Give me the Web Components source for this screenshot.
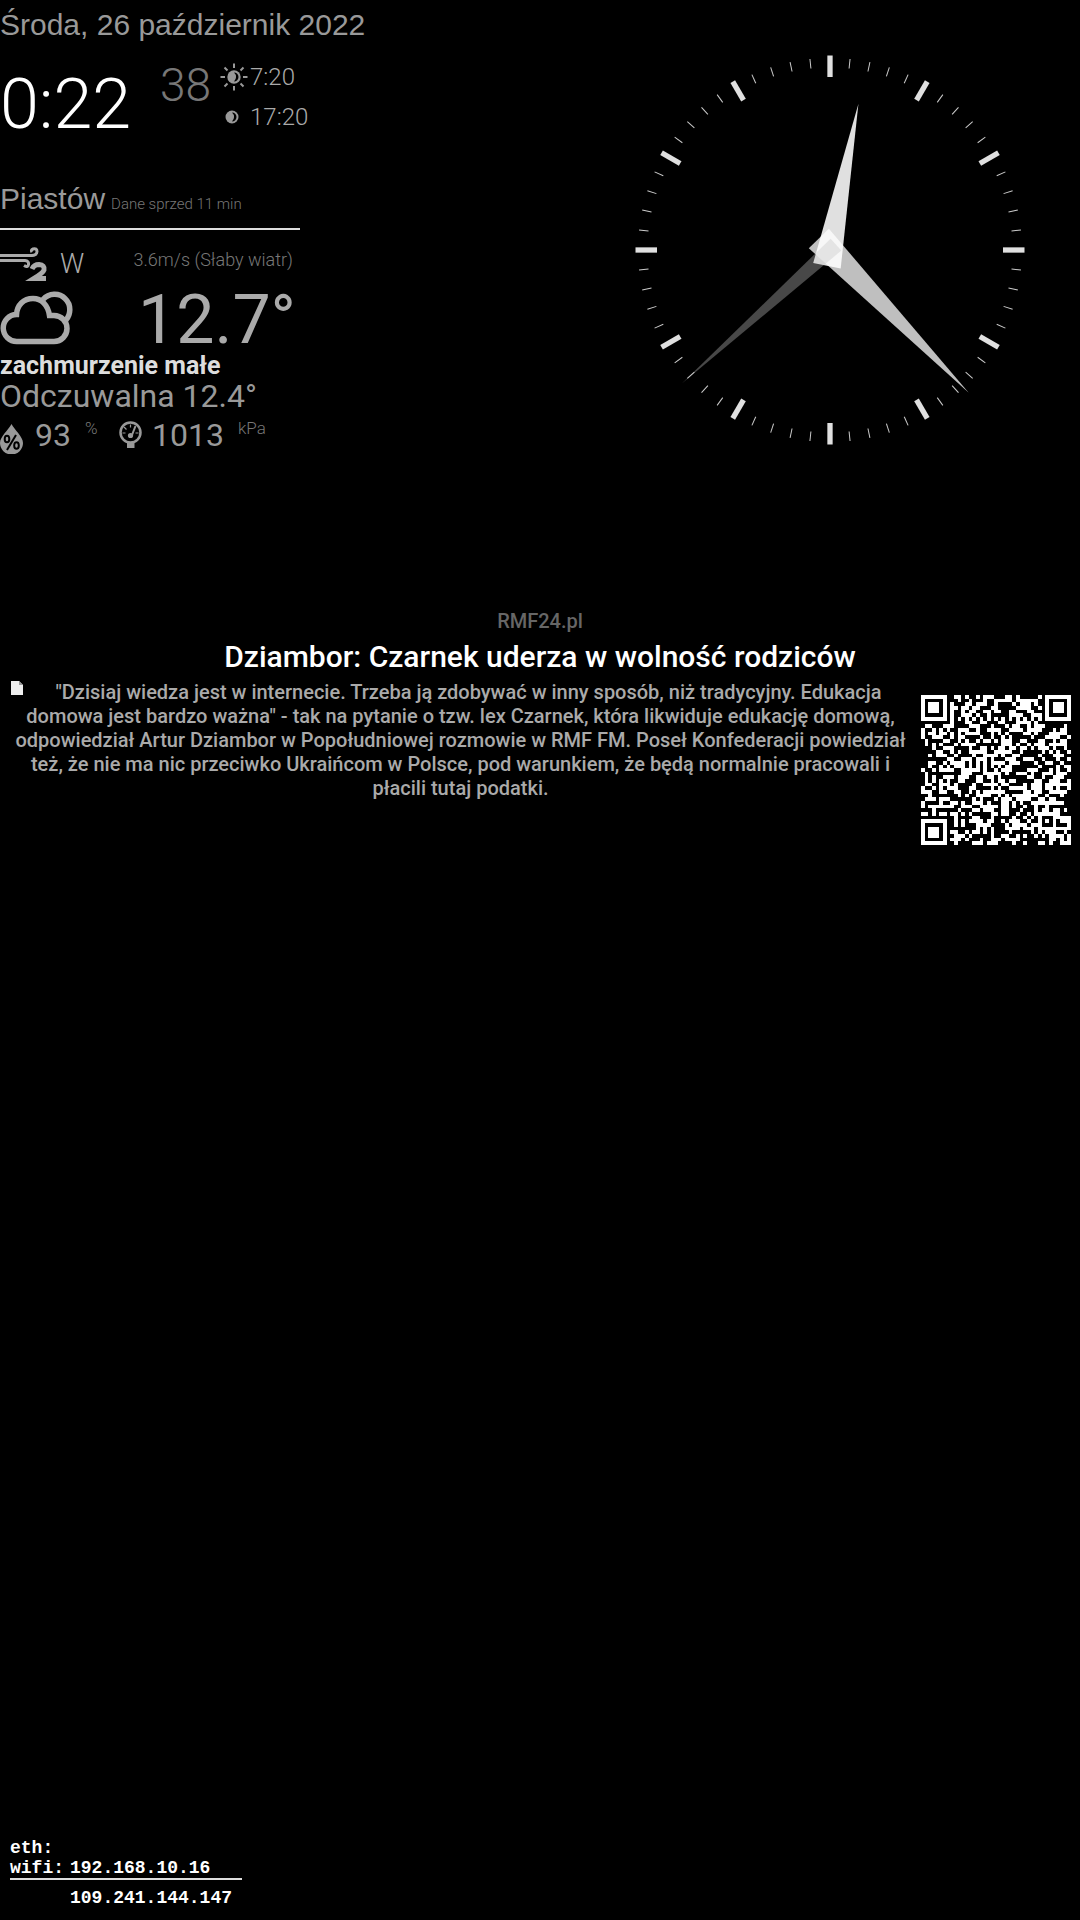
<!DOCTYPE html>
<html lang="pl"><head><meta charset="utf-8"><title>Lustro</title>
<style>body{margin:0;background:#000}</style></head><body>
<mirror-app></mirror-app>
<script>
const define=(name,html,ready)=>customElements.define(name,class extends HTMLElement{
  constructor(){super();this.attachShadow({mode:'open'}).innerHTML=html;}
  connectedCallback(){if(ready)ready(this.shadowRoot,this);}
});

define('date-time',`<style>
:host{display:block;color:#999}
.date{font:30px/50px "Liberation Sans",sans-serif}
.row{display:flex;align-items:flex-start;padding-top:7px;height:94px;box-sizing:border-box;font-family:Roboto,sans-serif;font-weight:300}
.time{font-size:70px;line-height:74px;margin-top:10px;color:#fff;min-width:160px}
.sec{font-size:46px;line-height:48px;margin-top:4px;color:#777;min-width:60px}
.sun{display:grid;grid-template-columns:30px auto;align-items:center;font-size:24px;line-height:40px;font-weight:300;color:#aaa}
svg{display:block}
</style>
<div class="date">Środa, 26 październik 2022</div>
<div class="row"><span class="time">0:22</span><span class="sec">38</span>
<div class="sun">
<svg width="28" height="28" viewBox="-14 -14 28 28"><circle r="6.7" fill="#999"/><path d="M0-4.500A4.500 4.500 0 0 1 0 4.500A6 6 0 0 0 0-4.500Z" fill="#000"/><g stroke="#999" stroke-width="2"><path d="M0-13.500V-9M0 13.500V9M-13.500 0H-9M13.500 0H9M-9.500-9.500L-6.500-6.500M9.500-9.500L6.500-6.500M-9.500 9.500L-6.500 6.500M9.500 9.500L6.500 6.500"/></g></svg><span>7:20</span>
<svg width="28" height="28" viewBox="-12 -14 28 28"><circle r="6.500" fill="#999"/><path d="M0-4.500A4.500 4.500 0 0 1 0 4.500A6 6 0 0 0 0-4.500Z" fill="#000"/></svg><span>17:20</span>
</div></div>`);

define('weather-panel',`<style>
:host{display:block;width:300px;color:#999;font:300 18px/20px Roboto,sans-serif}
header{display:flex;align-items:baseline;gap:6px;padding-top:30px;height:54px;border-bottom:2px solid #ddd;font:300 15px/50px Roboto,sans-serif;color:#777}
h2{margin:0;font:30px/50px "Liberation Sans",sans-serif;color:#999}
.row{display:flex}
svg{display:block;flex:none}
.wind{height:52px;padding-top:4px;align-items:center;gap:8px}
.wind b{font:300 27px/30px Roboto,sans-serif;color:#aaa;margin-top:8px}
.wind span{margin-left:auto;padding-right:7px;color:#777}
.wind svg{margin-top:8px}
.now{justify-content:space-between;align-items:center;height:66px;font-weight:400;font-size:68px;line-height:62px;color:#aaa;padding-right:4px}
.now svg{margin-top:-2px}
.now span{padding-top:2px}
.desc{font-weight:700;font-size:25px;line-height:28px;color:#ddd}
.feels{font-weight:400;font-size:32px;line-height:32px}
.air{font-weight:400;font-size:32px;line-height:46px}
.air div{display:flex;align-items:flex-start;width:118px}
.air div+div{width:auto}
.air svg{margin-top:12px}
.air div+div svg{margin-top:9px}
.air span{width:42px;padding-left:12px}
.air div+div span{width:78px;padding-left:8px}
.air small{font-weight:300;font-size:17px;line-height:32px;color:#777;margin-left:8px}
</style>
<header><h2>Piastów</h2><span>Dane sprzed 11 min</span></header>
<div class="row wind">
<svg width="52" height="34" viewBox="0 0 52 34" fill="none" stroke="#aaa" stroke-width="3"><path d="M0 8.500H32Q37 8 37 4.500T33 2Q30.500 3 32 5M0 13.500H25Q29 14 28.500 17.500T24 18.500"/><path d="M32 22Q34 17.500 39 17.500Q45 18 44 23Q43 26 34 31.500H46" stroke-width="5"/></svg>
<b>W</b><span>3.6m/s (Słaby wiatr)</span></div>
<div class="row now">
<svg width="73" height="54" viewBox="0 0 73 54" fill="none" stroke="#aaa" stroke-width="5.500"><path d="M17 50.500H54A13 13 0 0 0 54 24.500H49.500C48 14 41.500 7.500 33 7.500C23.500 7.500 17 14 16.500 23.500A13.500 13.500 0 0 0 17 50.500Z"/><path d="M43 8.500C49 2 59 1.500 65 7.500C72 14 70.500 24 66 29"/></svg>
<span>12.7°</span></div>
<div class="desc">zachmurzenie małe</div>
<div class="feels">Odczuwalna 12.4°</div>
<div class="row air"><div>
<svg width="23" height="30" viewBox="0 0 23 30"><path d="M11.500 0C14.500 6 23 12.500 23 19A11.500 11.500 0 0 1 0 19C0 12.500 8.500 6 11.500 0Z" fill="#999"/><g fill="none" stroke="#000" stroke-width="2"><path d="M16 11L7 26"/><ellipse cx="7" cy="15" rx="2.300" ry="3.300"/><ellipse cx="16.500" cy="21.500" rx="2.300" ry="3.300"/></g></svg>
<span>93</span><small>%</small></div><div>
<svg width="26" height="28" viewBox="-1 0 26 28"><path d="M8 20H15.500V27H8Z" fill="#999"/><circle cx="11.500" cy="11.500" r="10" fill="#000" stroke="#999" stroke-width="2.500"/><path d="M11.500 3.500V6.500M5 6L7.500 8.500M3.500 12H6.500M16.500 12H19.500" stroke="#999" stroke-width="1.200"/><path d="M16.500 5L13 14" stroke="#999" stroke-width="2"/><circle cx="11.500" cy="14.500" r="2.600" fill="#999"/></svg>
<span>1013</span><small>kPa</small></div></div>`);

define('analog-clock',`<style>:host{display:block;width:400px}svg{display:block;width:100%}</style>
<svg viewBox="-200 -200 400 400" role="img" aria-label="0:22:38"><g id="ticks"></g>
<path d="M-14 16H14L0-149Z" fill="#fff" fill-opacity=".88" transform="rotate(11)"/>
<path d="M-14 16H14L0-199Z" fill="#fff" fill-opacity=".75" transform="rotate(135.800)"/>
<path d="M-8 8H8L0-199Z" fill="#c4c4c4" fill-opacity=".37" transform="rotate(228)"/></svg>`,root=>{
  let s='';
  for(let i=0;i<60;i++)s+=i%5?`<path d="M0-192V-182.500" stroke="#ccc" stroke-width="1" transform="rotate(${i*6})"/>`:`<path d="M0-194.500V-173" stroke="#e0e0e0" stroke-width="5.300" transform="rotate(${i*6})"/>`;
  root.getElementById('ticks').innerHTML=s;
});

define('qr-code',`<style>:host{display:block;width:150px}svg{display:block;width:100%}</style>
<svg viewBox="0 0 41 41" shape-rendering="crispEdges" role="img" aria-label="QR"><path fill="#fff"/></svg>`,root=>{
  // Structural patterns of a 41-module symbol; the data area is placeholder filler.
  const n=41;let seed=2022,d='';
  const ring=(x,y,cx,cy)=>Math.max(Math.abs(x-cx),Math.abs(y-cy));
  for(let y=0;y<n;y++)for(let x=0;x<n;x++){
    seed=(seed*1103515245+12345)%2147483648;
    let on=(seed>>>16)%100<52;
    if(x===6||y===6)on=(x+y)%2===0;
    const a=ring(x,y,34,34);if(a<3)on=a!==1;
    for(const [cx,cy] of [[3,3],[37,3],[3,37]]){const r=ring(x,y,cx,cy);if(r<=4)on=r===3||r<2;}
    if(on)d+=`M${x} ${y}h1v1h-1z`;
  }
  root.querySelector('path').setAttribute('d',d);
});

define('news-feed',`<style>
:host{display:block;font:500 20px/24px Roboto,sans-serif;color:#aaa;text-align:center}
.source{color:#666;line-height:30px}
h1{margin:0;font:500 30px/42px Roboto,sans-serif;color:#fff}
.body{display:flex;align-items:flex-start;padding:2px 9px 0 11px;gap:11px}
p{margin:0;flex:1}
.pic{float:left;width:16px;height:16px;margin-top:1px}
qr-code{flex:none;margin-top:15px}
</style>
<div class="source">RMF24.pl</div><h1>Dziambor: Czarnek uderza w wolność rodziców</h1>
<div class="body"><p><svg class="pic" viewBox="0 0 16 16"><path d="M0 0H8L12 4V14H0Z" fill="#eee"/><path d="M8 0V4H12Z" fill="#999"/></svg>"Dzisiaj wiedza jest w internecie. Trzeba ją zdobywać w inny sposób, niż tradycyjny. Edukacja domowa jest bardzo ważna" - tak na pytanie o tzw. lex Czarnek, która likwiduje edukację domową, odpowiedział Artur Dziambor w Popołudniowej rozmowie w RMF FM. Poseł Konfederacji powiedział też, że nie ma nic przeciwko Ukraińcom w Polsce, pod warunkiem, że będą normalnie pracowali i płacili tutaj podatki.</p><qr-code></qr-code></div>`);

define('network-info',`<style>
:host{display:block;font:700 18px/20px "Liberation Mono",monospace;color:#fff}
dl{display:inline-grid;grid-template-columns:60px auto;margin:0;padding-right:32px;border-bottom:2px solid #ddd}
dd,dt{margin:0}
div{padding:8px 0 0 60px}
</style><dl><dt>eth:</dt><dd></dd><dt>wifi:</dt><dd>192.168.10.16</dd></dl><div>109.241.144.147</div>`);

define('mirror-app',`<style>
:host{display:flex;flex-direction:column;min-height:100vh;background:#000}
.top{display:flex;justify-content:space-between;align-items:flex-start}
analog-clock{margin:50px 50px 0 0}
news-feed{margin-top:148px}
network-info{margin:auto 10px 12px}
</style><div class="top"><div><date-time></date-time><weather-panel></weather-panel></div><analog-clock></analog-clock></div>
<news-feed></news-feed><network-info></network-info>`);
</script></body></html>
